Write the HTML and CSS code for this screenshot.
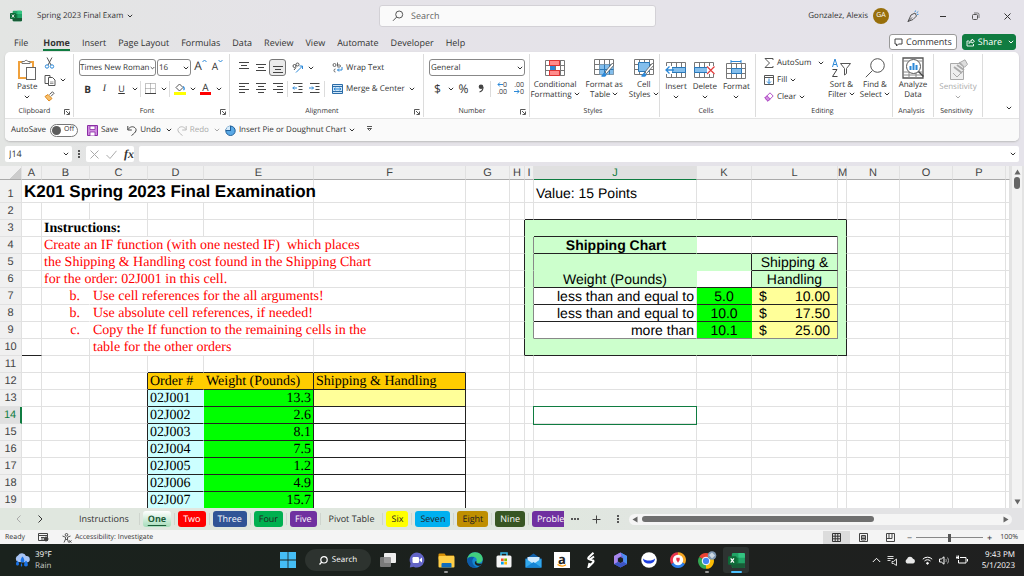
FILE: index.html
```html
<!DOCTYPE html>
<html lang="en">
<head>
  <meta charset="UTF-8" />
  <meta name="viewport" content="width=device-width, initial-scale=1.0"/>
  <title>Spring 2023 Final Exam</title>
  <link rel="stylesheet" href="styles.css">
</head>
<body>

  <svg class="defs" aria-hidden="true">
    <defs>
      <symbol id="chev" viewBox="0 0 6 4"><path d="M.8.8 3 3 5.2.8" fill="none" stroke="currentColor"/></symbol>
      <symbol id="launch" viewBox="0 0 6 6"><path d="M.5 5.5V.5h5M2 2l3 3M5.500 2.500v3h-3" fill="none" stroke="#444" stroke-width=".9"/></symbol>
      <symbol id="grid" viewBox="0 0 20 16"><path d="M.5.5h19v15H.5zM.5 5.500h19M.5 10.500h19M5.500.5v15M10.500.5v15M15.500.5v15" fill="#fff" stroke="#777"/></symbol>
      <symbol id="xl" viewBox="0 0 18 16">
        <rect x="4" width="14" height="16" rx="1.500" fill="#21a366"/>
        <path d="M11 0h5.500A1.500 1.500 0 0 1 18 1.500V5h-7z" fill="#33c481"/><path d="M4 5h7v6H4z" fill="#107c41"/><path d="M4 11h14v3.500a1.500 1.500 0 0 1-1.500 1.500H5.500A1.500 1.500 0 0 1 4 14.500z" fill="#185c37"/>
        <rect y="3.500" width="9" height="9" rx="1" fill="#0e6b38"/>
        <path d="M2.800 5.800l3.500 4.500M6.300 5.800l-3.500 4.500" stroke="#fff" stroke-width="1.300"/>
      </symbol>
    </defs>
  </svg>

  <div class="app">
    <header class="titlebar">
      <div class="doc">
        <svg class="logo"><use href="#xl"/></svg>
        <button class="doc-name">Spring 2023 Final Exam <svg class="chev"><use href="#chev"/></svg></button>
      </div>
      <label class="search">
        <svg width="12" height="12" viewBox="0 0 12 12"><circle cx="7.200" cy="4.500" r="3.500" fill="none" stroke="#555"/><path d="M4.700 7 1 10.800" stroke="#555"/></svg>
        <input type="text" placeholder="Search" aria-label="Search">
      </label>
      <div class="account">
        <span>Gonzalez, Alexis</span>
        <span class="avatar">GA</span>
        <button aria-label="Coming soon"><svg width="13" height="13" viewBox="0 0 13 13" fill="none" stroke="#444" stroke-width=".9"><path d="M2 11.500 5 5l4-2 1.500 3L7 9.500zM2 11.500l4-4"/><path d="M9 2l.6-1.500M10.500 3l1.800-1.500M11 4.500l1.500-.2" stroke="#2b88d8"/></svg></button>
        <button aria-label="Minimize"><svg width="9" height="9" viewBox="0 0 9 9"><path d="M1 4.500h6" stroke="#333"/></svg></button>
        <button aria-label="Restore"><svg width="9" height="9" viewBox="0 0 9 9" fill="none" stroke="#555"><rect x="1.500" y="2.500" width="5" height="5" rx="1"/><path d="M3 1h3.500a1.500 1.500 0 0 1 1.500 1.500V6" stroke-width=".8"/></svg></button>
        <button aria-label="Close"><svg width="9" height="9" viewBox="0 0 9 9"><path d="M1.500 1.500l6 6M7.500 1.500l-6 6" stroke="#333"/></svg></button>
      </div>
    </header>

    <nav class="menu">
      <button>File</button>
      <button class="active">Home</button>
      <button>Insert</button>
      <button>Page Layout</button>
      <button>Formulas</button>
      <button>Data</button>
      <button>Review</button>
      <button>View</button>
      <button>Automate</button>
      <button>Developer</button>
      <button>Help</button>
      <button class="comments"><svg width="9" height="9" viewBox="0 0 9 9"><path d="M1 1h7v5H4.500L2.500 8V6H1z" fill="none" stroke="#444"/></svg>Comments</button>
      <button class="share"><svg width="9" height="9" viewBox="0 0 9 9" fill="none" stroke="#fff" stroke-width=".9"><path d="M3 3H1v5h6.500V6M3 5.500C3 3.500 4.500 2.500 6 2.500V1l2.500 2.300L6 5.200V4C4.500 4 3.500 4.500 3 5.500z"/></svg>Share<svg class="chev"><use href="#chev"/></svg></button>
    </nav>

    <section class="ribbon">
      <div class="groups">
        <div class="group g-clip">
          <div class="body">
            <button class="big"><svg width="20" height="22" viewBox="0 0 20 22"><rect x="2" y="3" width="14" height="16" fill="#fff" stroke="#f0a13c" stroke-width="2"/><path d="M5 4.500V2.500h2.500a1.800 1.800 0 0 1 3.400 0H13v2z" fill="#fff" stroke="#777"/><rect x="9.500" y="8.500" width="9" height="12" fill="#fff" stroke="#666"/></svg>Paste<svg class="chev"><use href="#chev"/></svg></button>
            <div class="col3">
              <div class="row"><button class="ib" aria-label="Cut"><svg width="11" height="12" viewBox="0 0 11 12" fill="none"><path d="M3 .5l4 7.500M8 .5 4 8" stroke="#555"/><circle cx="3" cy="9.500" r="1.700" stroke="#2b88d8"/><circle cx="8" cy="9.500" r="1.700" stroke="#2b88d8"/></svg></button></div>
              <div class="row"><button class="ib" aria-label="Copy"><svg width="12" height="12" viewBox="0 0 12 12" fill="#fff" stroke="#555"><path d="M1 1.500h5v8H1z"/><path d="M4.500 3.500H8.500l2.500 2.500v5.500H4.500z"/><path d="M6 8h3.500M6 9.500h3.500" stroke-width=".6"/></svg></button><button class="cv" aria-label="Copy options"><svg class="chev"><use href="#chev"/></svg></button></div>
              <div class="row"><button class="ib" aria-label="Format Painter"><svg width="11" height="11" viewBox="0 0 11 11"><path d="M1 5.500 5 10l3-2.500-4-4z" fill="#f7c06c" stroke="#e08a1e"/><path d="M5.500 3.500 8.500.8l1.500 1.500-3 3" fill="#fff" stroke="#555"/></svg></button></div>
            </div>
          </div>
          <div class="foot"><span>Clipboard</span><svg class="launch"><use href="#launch"/></svg></div>
        </div>

        <div class="group g-font">
          <div class="body rows">
            <div class="row">
              <span class="drop name"><select aria-label="Font"><option>Times New Roman</option></select><svg class="chev"><use href="#chev"/></svg></span>
              <span class="drop size"><select aria-label="Font size"><option>16</option></select><svg class="chev"><use href="#chev"/></svg></span>
              <button class="ib grow" aria-label="Increase font size">A<svg width="5" height="4" viewBox="0 0 5 4"><path d="M.5 3l2-2 2 2" fill="none" stroke="#2b88d8"/></svg></button>
              <button class="ib shrink" aria-label="Decrease font size">A<svg width="5" height="4" viewBox="0 0 5 4"><path d="M.5 1l2 2 2-2" fill="none" stroke="#2b88d8"/></svg></button>
            </div>
            <div class="row">
              <button class="ib bold">B</button>
              <button class="ib ital">I</button>
              <button class="ib under">U</button>
              <button class="cv" aria-label="Underline options"><svg class="chev"><use href="#chev"/></svg></button>
              <i class="sep"></i>
              <button class="ib" aria-label="Borders"><svg width="11" height="11" viewBox="0 0 11 11"><path d="M.5.5h10v10H.5zM5.500.5v10M.5 5.500h10" fill="none" stroke="#888" stroke-dasharray="1 1"/><path d="M0 10.500h11" stroke="#444"/></svg></button>
              <button class="cv" aria-label="Border options"><svg class="chev"><use href="#chev"/></svg></button>
              <i class="sep"></i>
              <button class="ib" aria-label="Fill color"><svg width="12" height="13" viewBox="0 0 12 13"><path d="M2 5.500 5.500 2l3.500 3.500L5.500 9z" fill="#fff" stroke="#555"/><path d="M9 4.500c1.500 1 1.500 3 .5 3.500" fill="none" stroke="#2b88d8" stroke-width="1.300"/><path d="M0 10h12v3H0z" fill="#ff0"/></svg></button>
              <button class="cv" aria-label="Fill options"><svg class="chev"><use href="#chev"/></svg></button>
              <button class="ib fontcolor">A</button>
              <button class="cv" aria-label="Font color options"><svg class="chev"><use href="#chev"/></svg></button>
            </div>
          </div>
          <div class="foot"><span>Font</span><svg class="launch"><use href="#launch"/></svg></div>
        </div>

        <div class="group g-align">
          <div class="body rows">
            <div class="row">
              <button class="ib" aria-label="Top align"><svg width="10" height="11" viewBox="0 0 10 11" stroke="#444"><path d="M0 .5h10M2 3.500h6M0 6.500h10"/></svg></button>
              <button class="ib" aria-label="Middle align"><svg width="10" height="11" viewBox="0 0 10 11" stroke="#444"><path d="M0 2.500h10M2 5.500h6M0 8.500h10"/></svg></button>
              <button class="ib on" aria-label="Bottom align"><svg width="10" height="11" viewBox="0 0 10 11" stroke="#444"><path d="M0 4.500h10M2 7.500h6M0 10.500h10"/></svg></button>
              <i class="sep clear"></i>
              <button class="ib" aria-label="Orientation"><svg width="12" height="11" viewBox="0 0 12 11" fill="none"><circle cx="2.500" cy="4" r="1.500" stroke="#555"/><circle cx="5.500" cy="2.500" r="1.500" stroke="#555"/><path d="M4 5.500 2 8" stroke="#555"/><path d="M4 10.500 10.500 4M7.500 4h3v3" stroke="#2b88d8"/></svg></button>
              <button class="cv" aria-label="Orientation options"><svg class="chev"><use href="#chev"/></svg></button>
              <button class="txt wrap"><svg width="11" height="11" viewBox="0 0 11 11" fill="none"><circle cx="2.500" cy="3" r="1.500" stroke="#666"/><path d="M5.500.5v4M5.500 3h2a1 1 0 0 1 0 2H5.500M3.500 7a1.500 1.500 0 1 0 0 3" stroke="#666"/><path d="M10 5v3H5.500M7 6.500 5.500 8 7 9.500" stroke="#2b88d8"/></svg>Wrap Text</button>
            </div>
            <div class="row">
              <button class="ib" aria-label="Align left"><svg width="10" height="11" viewBox="0 0 10 11" stroke="#444"><path d="M0 .5h10M0 3.500h6M0 6.500h10M0 9.500h6"/></svg></button>
              <button class="ib" aria-label="Center"><svg width="10" height="11" viewBox="0 0 10 11" stroke="#444"><path d="M0 .5h10M2 3.500h6M0 6.500h10M2 9.500h6"/></svg></button>
              <button class="ib" aria-label="Align right"><svg width="10" height="11" viewBox="0 0 10 11" stroke="#444"><path d="M0 .5h10M4 3.500h6M0 6.500h10M4 9.500h6"/></svg></button>
              <i class="sep"></i>
              <button class="ib" aria-label="Decrease indent"><svg width="11" height="11" viewBox="0 0 11 11" fill="none" stroke="#444"><path d="M1 .5h9.500M6.500 3.500h4M6.500 6.500h4M1 9.500h9.500"/><path d="M5 5H.8M2.300 3.500.8 5l1.500 1.500" stroke="#2b88d8"/></svg></button>
              <button class="ib" aria-label="Increase indent"><svg width="11" height="11" viewBox="0 0 11 11" fill="none" stroke="#444"><path d="M1 .5h9.500M6.500 3.500h4M6.500 6.500h4M1 9.500h9.500"/><path d="M0 5h4.500M3 3.500 4.500 5 3 6.500" stroke="#2b88d8"/></svg></button>
              <i class="sep"></i>
              <button class="txt merge"><svg width="11" height="10" viewBox="0 0 11 10" fill="none"><path d="M.5.5h10v9H.5z" fill="#cfe6f8" stroke="#2b6ca8"/><path d="M.5 2.500h10M.5 7.500h10" stroke="#2b6ca8"/><path d="M2 5h7M3.500 3.800 2 5l1.500 1.200M7.500 3.800 9 5 7.500 6.200" stroke="#2b88d8"/></svg>Merge &amp; Center</button>
              <button class="cv" aria-label="Merge options"><svg class="chev"><use href="#chev"/></svg></button>
            </div>
          </div>
          <div class="foot"><span>Alignment</span><svg class="launch"><use href="#launch"/></svg></div>
        </div>

        <div class="group g-num">
          <div class="body rows">
            <div class="row"><span class="drop general"><select aria-label="Number format"><option>General</option></select><svg class="chev"><use href="#chev"/></svg></span></div>
            <div class="row">
              <button class="ib sym">$</button>
              <button class="cv" aria-label="Currency options"><svg class="chev"><use href="#chev"/></svg></button>
              <button class="ib sym">%</button>
              <button class="ib" aria-label="Comma style"><svg width="6" height="9" viewBox="0 0 6 9"><circle cx="3" cy="2.800" r="2.300" fill="#444"/><path d="M5 3c0 3-1.500 4.500-3.500 5" fill="none" stroke="#444" stroke-width="1.200"/></svg></button>
              <i class="sep"></i>
              <button class="ib dec"><svg width="6" height="5" viewBox="0 0 6 5"><path d="M6 2.500H1M2.800.5 1 2.500l1.800 2" fill="none" stroke="#2b88d8"/></svg>0<br>.00</button>
              <button class="ib dec">.00<br><svg width="6" height="5" viewBox="0 0 6 5"><path d="M0 2.500h5M3.200.5 5 2.500l-1.800 2" fill="none" stroke="#2b88d8"/></svg>0</button>
            </div>
          </div>
          <div class="foot"><span>Number</span><svg class="launch"><use href="#launch"/></svg></div>
        </div>

        <div class="group g-styles">
          <div class="body">
            <button class="big"><svg width="20" height="20" viewBox="0 0 20 20"><use href="#grid" y="2" width="20" height="16"/><path d="M4.500 2.500h10v5h-10zM4.500 12.500h10v5h-10z" fill="#ff8b8b" stroke="#d33"/><path d="M5 8h5v4H5z" fill="#2b88d8"/></svg>Conditional<br>Formatting <svg class="chev"><use href="#chev"/></svg></button>
            <button class="big"><svg width="20" height="20" viewBox="0 0 20 20"><use href="#grid" y="1" width="20" height="16"/><path d="M5.500 6.500h14v10h-14z" fill="#83beec"/><path d="M5.500 11.500h14M10.500 6.500v10M15.500 6.500v10" stroke="#2b78b8"/><path d="M18.500 5 11 14l1.500 1.500L20 7z" fill="#fff" stroke="#555" stroke-width=".8"/><path d="M10.500 14.500c-2 .5-1.500 3-4 3.500 3 1.500 6 1 6-1.500z" fill="#2b88d8"/></svg>Format as<br>Table <svg class="chev"><use href="#chev"/></svg></button>
            <button class="big"><svg width="20" height="20" viewBox="0 0 20 20"><use href="#grid" y="1" width="20" height="16"/><path d="M4.500 4.500h11v9h-11z" fill="#83beec" stroke="#2b78b8"/><path d="M18.500 5 11 14l1.500 1.500L20 7z" fill="#fff" stroke="#555" stroke-width=".8"/><path d="M10.500 14.500c-2 .5-1.500 3-4 3.500 3 1.500 6 1 6-1.500z" fill="#2b88d8"/></svg>Cell<br>Styles <svg class="chev"><use href="#chev"/></svg></button>
          </div>
          <div class="foot"><span>Styles</span></div>
        </div>

        <div class="group g-cells">
          <div class="body">
            <button class="big"><svg width="21" height="20" viewBox="0 0 21 20"><use href="#grid" x="1" y="2" width="20" height="16"/><path d="M7 7.500h13.500v5H7z" fill="#83beec" stroke="#2b78b8"/><path d="M0 6h7v8H0z" fill="#fff"/><path d="M9 10H1M4.500 6.500 1 10l3.500 3.500" fill="none" stroke="#2b88d8" stroke-width="1.300"/></svg>Insert<svg class="chev"><use href="#chev"/></svg></button>
            <button class="big"><svg width="21" height="20" viewBox="0 0 21 20"><use href="#grid" y="2" width="20" height="16"/><path d="M.5 7.500h13v5H.5z" fill="#83beec" stroke="#2b78b8"/><path d="M13 6h8v8h-8z" fill="#fff"/><path d="M13 6.500l7.500 7.500M20.500 6.500 13 14" stroke="#e23c3c" stroke-width="1.200"/></svg>Delete<svg class="chev"><use href="#chev"/></svg></button>
            <button class="big"><svg width="20" height="20" viewBox="0 0 20 20"><path d="M5 1.500h10M5 0v3M15 0v3" stroke="#2b88d8"/><use href="#grid" y="3" width="20" height="16"/><path d="M5.500 8.500h10v5h-10z" fill="#83beec" stroke="#2b78b8"/></svg>Format<svg class="chev"><use href="#chev"/></svg></button>
          </div>
          <div class="foot"><span>Cells</span></div>
        </div>

        <div class="group g-edit">
          <div class="body">
            <div class="col3 edits">
              <button class="txt"><svg width="10" height="10" viewBox="0 0 10 10"><path d="M9 2V.5H1L5.500 5 1 9.500h8V8" fill="none" stroke="#555"/></svg><span class="wide">AutoSum</span><svg class="chev"><use href="#chev"/></svg></button>
              <button class="txt"><svg width="10" height="10" viewBox="0 0 10 10" fill="none"><path d="M.5.5h9v9h-9zM.5 2.500h9" stroke="#555"/><path d="M5 3.500v5M3 6.500l2 2 2-2" stroke="#2b88d8"/></svg>Fill<svg class="chev"><use href="#chev"/></svg></button>
              <button class="txt"><svg width="10" height="10" viewBox="0 0 10 10"><path d="M.8 6 6 .8 9.200 4 4 9.200z" fill="#fff" stroke="#b14fc5"/><path d="M.8 6 3 3.800 6.200 7 4 9.200z" fill="#d08be0" stroke="#b14fc5"/></svg>Clear<svg class="chev"><use href="#chev"/></svg></button>
            </div>
            <button class="big"><svg width="20" height="20" viewBox="0 0 20 20" fill="none"><path d="M1.500 9 4 1l2.500 8M2.300 6.500h3.400" stroke="#2b88d8"/><path d="M1.500 11.500H6L1.500 18.500H6.500" stroke="#444"/><path d="M9.500 5.500h10l-4 5v5l-2 1.500v-6.500z" stroke="#555"/></svg>Sort &amp;<br>Filter <svg class="chev"><use href="#chev"/></svg></button>
            <button class="big"><svg width="20" height="20" viewBox="0 0 20 20" fill="none" stroke="#555"><circle cx="12.500" cy="7.500" r="6.800"/><path d="M7.500 12.500.8 19.200"/></svg>Find &amp;<br>Select <svg class="chev"><use href="#chev"/></svg></button>
          </div>
          <div class="foot"><span>Editing</span></div>
        </div>

        <div class="group g-analysis">
          <div class="body">
            <button class="big"><svg width="22" height="22" viewBox="0 0 22 22" fill="none"><path d="M1 1h20v20H1z" stroke="#555" stroke-width="1.300"/><path d="M1 4h20M1 15h20M1 18h20M7 15v6M14 15v6" stroke="#888"/><circle cx="11.500" cy="9.500" r="7" fill="#fff" stroke="#555"/><path d="M8.500 9v4M11.500 6v7M14.500 8v5" stroke="#2b88d8" stroke-width="2"/><path d="M16.500 14.500l5 5" stroke="#444" stroke-width="1.400"/></svg>Analyze<br>Data</button>
          </div>
          <div class="foot"><span>Analysis</span></div>
        </div>

        <div class="group g-sens">
          <div class="body">
            <button class="big" disabled><svg width="20" height="22" viewBox="0 0 20 22" fill="none" stroke="#aaa"><path d="M2.500 4.500h13v16h-13z" fill="#eee"/><path d="M5 14l4 4 6-6"/><path d="M6 8l8 6M9 6l7 5M11 3.500l5 4" stroke-width="2"/><path d="M12 3.500 17 .8l2.500 4.500-3 3z" fill="#ddd"/></svg>Sensitivity<svg class="chev"><use href="#chev"/></svg></button>
          </div>
          <div class="foot"><span>Sensitivity</span></div>
        </div>
        <button class="collapse" aria-label="Collapse ribbon"><svg class="chev"><use href="#chev"/></svg></button>
      </div>

      <div class="quick">
        <label class="autosave">AutoSave <input type="checkbox"><span class="toggle">Off</span></label>
        <button class="txt save"><svg width="11" height="11" viewBox="0 0 11 11"><path d="M.5.5h10v10H.5z" fill="#d08be0" stroke="#8a2da5"/><path d="M3 1h5v3.500H3zM3 7h5v4H3z" fill="#fff" stroke="#8a2da5" stroke-width=".8"/></svg>Save</button>
        <button class="txt undo"><svg width="10" height="11" viewBox="0 0 10 11"><path d="M.8 1v4h4M1 4.500C3 1.500 6 1 8 2.800s1.500 4.200-3.500 7.700" fill="none" stroke="#444"/></svg>Undo</button>
        <svg class="chev"><use href="#chev"/></svg>
        <button class="txt redo" disabled><svg width="10" height="11" viewBox="0 0 10 11"><path d="M9.200 1v4h-4M9 4.500C7 1.500 4 1 2 2.800S.5 7 5.500 10.500" fill="none" stroke="#bbb"/></svg>Redo</button>
        <svg class="chev dim"><use href="#chev"/></svg>
        <button class="txt"><svg width="11" height="11" viewBox="0 0 11 11"><circle cx="5.500" cy="5.800" r="4.700" fill="#5aa9e6" stroke="#1f5f99"/><path d="M1 5.500A4.500 4.500 0 0 1 5.500 1v4.500z" fill="#d6ebfa"/><path d="M5.500 6V.8M5.500 5.500H.8" stroke="#1f5f99"/></svg>Insert Pie or Doughnut Chart<svg class="chev"><use href="#chev"/></svg></button>
        <button class="custom" aria-label="Customize toolbar"><svg width="5" height="6" viewBox="0 0 5 6"><path d="M0 .5h5M.5 2.500l2 2 2-2z" fill="none" stroke="#444" stroke-width=".9"/></svg></button>
      </div>
    </section>

    <div class="formula">
      <div class="namebox"><input type="text" value="J14" aria-label="Name box"><svg class="chev"><use href="#chev"/></svg></div>
      <svg class="dots" viewBox="0 0 2 8"><path d="M0 0h2v2H0zM0 3h2v2H0zM0 6h2v2H0z" fill="#555"/></svg>
      <div class="fx">
        <svg width="9" height="9" viewBox="0 0 9 9"><path d="M.5.5l8 8M8.500.5l-8 8" stroke="#aaa"/></svg>
        <svg width="11" height="9" viewBox="0 0 11 9"><path d="M.5 5 4 8.500 10.500.8" fill="none" stroke="#aaa"/></svg>
        <button>fx</button>
      </div>
      <div class="entry"><input type="text" aria-label="Formula bar"><svg class="chev"><use href="#chev"/></svg></div>
    </div>

    <main class="sheet">
      <div class="cells">
        <table>
          <colgroup>
            <col class="c-num"><col class="c-a"><col class="c-b"><col class="c-c"><col class="c-d"><col class="c-e"><col class="c-f"><col class="c-g"><col class="c-h"><col class="c-i"><col class="c-j"><col class="c-k"><col class="c-l"><col class="c-m"><col class="c-n"><col class="c-n"><col class="c-n"><col>
          </colgroup>
          <thead>
            <tr><th class="corner"></th><th>A</th><th>B</th><th>C</th><th>D</th><th>E</th><th>F</th><th>G</th><th>H</th><th>I</th><th class="cur">J</th><th>K</th><th>L</th><th>M</th><th>N</th><th>O</th><th>P</th><th></th></tr>
          </thead>
          <tbody>
            <tr class="first"><th>1</th><td colspan="5" class="title">K201 Spring 2023 Final Examination</td><td></td><td></td><td></td><td></td><td class="value">Value: 15 Points</td><td></td><td></td><td></td><td></td><td></td><td></td><td></td></tr>
            <tr><th>2</th><td></td><td></td><td></td><td></td><td></td><td></td><td></td><td></td><td class="bb"></td><td class="bb"></td><td class="bb"></td><td class="bb"></td><td class="bb"></td><td></td><td></td><td></td><td></td></tr>
            <tr><th>3</th><td></td><td colspan="2" class="strong">Instructions:</td><td></td><td></td><td></td><td></td><td class="br"></td><td class="g"></td><td class="g bb"></td><td class="g bb"></td><td class="g bb"></td><td class="g br"></td><td></td><td></td><td></td><td></td></tr>
            <tr><th>4</th><td></td><td colspan="5" class="red">Create an IF function (with one nested IF)  which places</td><td></td><td class="br"></td><td class="g bg"></td><td class="g bb chart">Shipping Chart</td><td class="bb"></td><td class="bb bg"></td><td class="g br"></td><td></td><td></td><td></td><td></td></tr>
            <tr><th>5</th><td></td><td colspan="5" class="red">the Shipping &amp; Handling cost found in the Shipping Chart</td><td></td><td class="br"></td><td class="g bg"></td><td class="g"></td><td class="g br"></td><td class="g mid bb bg">Shipping &amp;</td><td class="g br"></td><td></td><td></td><td></td><td></td></tr>
            <tr><th>6</th><td></td><td colspan="4" class="red">for the order: 02J001 in this cell.</td><td></td><td></td><td class="br"></td><td class="g bg"></td><td class="g mid bb">Weight (Pounds)</td><td class="bb br"></td><td class="g mid bb bg">Handling</td><td class="g br"></td><td></td><td></td><td></td><td></td></tr>
            <tr><th>7</th><td></td><td class="red item">b.</td><td colspan="4" class="red step">Use cell references for the all arguments!</td><td></td><td class="br"></td><td class="g bg"></td><td class="num arial bb">less than and equal to</td><td class="lime mid bb">5.0</td><td class="yellow bb bg"><div class="money"><span>$</span><span>10.00</span></div></td><td class="g br"></td><td></td><td></td><td></td><td></td></tr>
            <tr><th>8</th><td></td><td class="red item">b.</td><td colspan="4" class="red step">Use absolute cell references, if needed!</td><td></td><td class="br"></td><td class="g bg"></td><td class="num arial bb">less than and equal to</td><td class="lime mid bb">10.0</td><td class="yellow bb bg"><div class="money"><span>$</span><span>17.50</span></div></td><td class="g br"></td><td></td><td></td><td></td><td></td></tr>
            <tr><th>9</th><td></td><td class="red item">c.</td><td colspan="4" class="red step">Copy the If function to the remaining cells in the</td><td></td><td class="br"></td><td class="g bg"></td><td class="num arial bbg">more than</td><td class="lime mid bbg">10.1</td><td class="yellow bbg bg"><div class="money"><span>$</span><span>25.00</span></div></td><td class="g br"></td><td></td><td></td><td></td><td></td></tr>
            <tr><th>10</th><td class="bb"></td><td></td><td colspan="3" class="red step">table for the other orders</td><td></td><td></td><td class="br"></td><td class="g bb"></td><td class="g bb"></td><td class="g bb"></td><td class="g bb"></td><td class="g bb br"></td><td></td><td></td><td></td><td></td></tr>
            <tr><th>11</th><td></td><td></td><td></td><td class="bb"></td><td class="bb"></td><td class="bb"></td><td></td><td></td><td></td><td></td><td></td><td></td><td></td><td></td><td></td><td></td><td></td></tr>
            <tr><th>12</th><td></td><td></td><td class="br"></td><td class="gold bb">Order #</td><td class="gold bb br">Weight (Pounds)</td><td class="gold bb br">Shipping &amp; Handling</td><td></td><td></td><td></td><td></td><td></td><td></td><td></td><td></td><td></td><td></td><td></td></tr>
            <tr><th>13</th><td></td><td></td><td class="br"></td><td class="aqua bb">02J001</td><td class="lime num bb br">13.3</td><td class="yellow bb br"></td><td></td><td></td><td></td><td></td><td></td><td></td><td></td><td></td><td></td><td></td><td></td></tr>
            <tr><th class="cur">14</th><td></td><td></td><td class="br"></td><td class="aqua bb">02J002</td><td class="lime num bb br">2.6</td><td class="bb br"></td><td></td><td></td><td></td><td class="selected"></td><td></td><td></td><td></td><td></td><td></td><td></td><td></td></tr>
            <tr><th>15</th><td></td><td></td><td class="br"></td><td class="aqua bb">02J003</td><td class="lime num bb br">8.1</td><td class="bb br"></td><td></td><td></td><td></td><td></td><td></td><td></td><td></td><td></td><td></td><td></td><td></td></tr>
            <tr><th>16</th><td></td><td></td><td class="br"></td><td class="aqua bb">02J004</td><td class="lime num bb br">7.5</td><td class="bb br"></td><td></td><td></td><td></td><td></td><td></td><td></td><td></td><td></td><td></td><td></td><td></td></tr>
            <tr><th>17</th><td></td><td></td><td class="br"></td><td class="aqua bb">02J005</td><td class="lime num bb br">1.2</td><td class="bb br"></td><td></td><td></td><td></td><td></td><td></td><td></td><td></td><td></td><td></td><td></td><td></td></tr>
            <tr><th>18</th><td></td><td></td><td class="br"></td><td class="aqua bb">02J006</td><td class="lime num bb br">4.9</td><td class="bb br"></td><td></td><td></td><td></td><td></td><td></td><td></td><td></td><td></td><td></td><td></td><td></td></tr>
            <tr><th>19</th><td></td><td></td><td class="br"></td><td class="aqua">02J007</td><td class="lime num br">15.7</td><td class="br"></td><td></td><td></td><td></td><td></td><td></td><td></td><td></td><td></td><td></td><td></td><td></td></tr>
          </tbody>
        </table>
      </div>
      <div class="vscroll">
        <svg width="7" height="6" viewBox="0 0 7 6"><path d="M3.500.5l3 5h-6z" fill="#666"/></svg>
        <div class="thumb"></div>
        <svg width="7" height="6" viewBox="0 0 7 6"><path d="M3.500 5.500l3-5h-6z" fill="#666"/></svg>
      </div>
    </main>

    <div class="tabs">
      <button class="arrow dim" aria-label="Previous sheet"><svg width="5" height="8" viewBox="0 0 5 8"><path d="M4.500.5 1 4l3.500 3.500" fill="none" stroke="currentColor"/></svg></button>
      <button class="arrow" aria-label="Next sheet"><svg width="5" height="8" viewBox="0 0 5 8"><path d="M.5.5 4 4 .5 7.500" fill="none" stroke="currentColor"/></svg></button>
      <button class="tab plain lead">Instructions</button>
      <button class="tab one">One</button>
      <button class="tab two">Two</button>
      <button class="tab three">Three</button>
      <button class="tab four">Four</button>
      <button class="tab five">Five</button>
      <button class="tab plain">Pivot Table</button>
      <button class="tab six">Six</button>
      <button class="tab seven">Seven</button>
      <button class="tab eight">Eight</button>
      <button class="tab nine">Nine</button>
      <button class="tab prob">Proble</button>
      <button class="more" aria-label="More sheets"><svg width="8" height="2" viewBox="0 0 8 2"><path d="M0 0h2v2H0zM3 0h2v2H3zM6 0h2v2H6z" fill="#555"/></svg></button>
      <button class="more" aria-label="New sheet"><svg width="9" height="9" viewBox="0 0 9 9"><path d="M4.500.5v8M.5 4.500h8" stroke="#444"/></svg></button>
      <svg class="dots" viewBox="0 0 2 8"><path d="M0 0h2v2H0zM0 3h2v2H0zM0 6h2v2H0z" fill="#555"/></svg>
      <div class="hscroll">
        <svg width="6" height="7" viewBox="0 0 6 7"><path d="M.5 3.500l5-3v6z" fill="#666"/></svg>
        <div class="track"><div class="thumb"></div></div>
        <svg width="6" height="7" viewBox="0 0 6 7"><path d="M5.500 3.500l-5-3v6z" fill="#666"/></svg>
      </div>
    </div>

    <footer class="status">
      <span>Ready</span>
      <svg width="11" height="9" viewBox="0 0 11 9" fill="none" stroke="#444"><path d="M.5.5h9v7h-9zM.5 2.500h9M3 4.500h3M3 6h2"/><circle cx="8" cy="6" r="2" fill="#444"/></svg>
      <button class="txt"><svg width="10" height="10" viewBox="0 0 10 10" fill="none" stroke="#444" stroke-width=".9"><circle cx="4.500" cy="1.800" r="1.300"/><path d="M.5 3l3 1.200v2L2 9.500M8.500 3l-3 1.200v2l1 3.300M3.500 6.500h2M7 7.500l2.500 2M9.500 7.500 7 9.500"/></svg>Accessibility: Investigate</button>
      <div class="views">
        <button class="on" aria-label="Normal"><svg width="9" height="9" viewBox="0 0 9 9" fill="none" stroke="#333"><path d="M.5.5h8v8h-8zM.5 3.200h8M.5 5.800h8M3.200.5v8M5.800.5v8"/></svg></button>
        <button aria-label="Page layout"><svg width="9" height="9" viewBox="0 0 9 9" fill="none" stroke="#444"><path d="M.5.5h8v8h-8zM2.500 2.500h4v4.500h-4zM3 4h3M3 5.500h3"/></svg></button>
        <button aria-label="Page break"><svg width="9" height="9" viewBox="0 0 9 9" fill="none" stroke="#444"><path d="M.5.5h8v8h-8zM3 .5v5h3v-5M.5 5.500h3"/></svg></button>
      </div>
      <div class="zoom">
        <button aria-label="Zoom out">−</button>
        <input type="range" min="0" max="100" value="50" aria-label="Zoom">
        <button aria-label="Zoom in">+</button>
        <span class="pct">100%</span>
      </div>
    </footer>
  </div>

  <div class="taskbar">
    <div class="weather">
      <svg width="17" height="16" viewBox="0 0 17 16"><path d="M4 10a3.500 3.500 0 0 1 0-6.500A4.500 4.500 0 0 1 12 4a3 3 0 0 1 1 6.500z" fill="#a8c4f5"/><path d="M3.500 8.500c-2 2.500-2 5 0 5s2-2.500 0-5zM8.500 4.500c-2.500 3-2.500 6 0 6s2.500-3 0-6zM12 8.500c-2.500 3-2.500 6 0 6s2.500-3 0-6zM7.500 11c-1 1.500-1 3.500 0 3.500s1-2 0-3.500z" fill="#1a73e8"/></svg>
      <div>39°F<br><span>Rain</span></div>
    </div>
    <div class="apps">
      <button aria-label="Start"><svg width="16" height="16" viewBox="0 0 16 16"><path d="M0 0h7.600v7.600H0zM8.400 0H16v7.600H8.400zM0 8.400h7.600V16H0zM8.400 8.400H16V16H8.400z" fill="#45bdf5"/></svg></button>
      <button class="pill"><svg width="9" height="9" viewBox="0 0 9 9" fill="none" stroke="#fff" stroke-width="1.200"><circle cx="5" cy="3.800" r="3.200"/><path d="M2.800 6 .5 8.500"/></svg>Search</button>
      <button aria-label="Task view"><svg width="18" height="16" viewBox="0 0 18 16"><rect x="5" y="1" width="12" height="10" rx="1" fill="#eee"/><rect x="1" y="5" width="11" height="10" rx="1" fill="#8a8a8a" opacity=".85"/></svg></button>
      <button aria-label="Chat"><svg width="16" height="16" viewBox="0 0 16 16"><path d="M8 .5a7.500 7.500 0 1 1-3.500 14.200L.8 15.500l.7-4A7.500 7.500 0 0 1 8 .5z" fill="#6264c7"/><rect x="3.500" y="5" width="6.500" height="6" rx="1.200" fill="#fff"/><path d="M10.500 7.500l2.500-2v5l-2.500-2z" fill="#fff"/></svg></button>
      <button class="open" aria-label="File Explorer"><svg width="17" height="15" viewBox="0 0 17 15"><path d="M.5 1.500A1 1 0 0 1 1.500.5h5l1.500 2h8v4H.5z" fill="#d99208"/><rect x=".5" y="3" width="16" height="11.500" rx="1" fill="#ffcf48"/><path d="M3.500 14.500V11a1 1 0 0 1 1-1h8a1 1 0 0 1 1 1v3.500z" fill="#0f6cbd"/></svg></button>
      <button aria-label="Edge"><svg width="16" height="16" viewBox="0 0 16 16"><circle cx="8" cy="8" r="7.800" fill="#1687d0"/><path d="M.3 7C1 3 4 .2 8 .2c5 0 8 3.500 7.700 7C15.500 9.500 13.500 11 11 11c-1.500 0-2-1-1.500-2 1-2-1-4.500-4-4.300C3 5 1.300 6 .3 7z" fill="#42cf7e"/><path d="M.3 7C1.500 4.500 5 4 7.500 5.500 5.500 6.500 4.500 9 6 12c1 2 3 3 5 3.200C5 17.500-.5 13 .3 7z" fill="#0d5aa8"/><path d="M9.500 9c-1 2 1 3.500 5.500 2.500-1 2-3 2.800-5 2C7 12 7.500 9 9.500 9z" fill="#1b211d"/></svg></button>
      <button aria-label="Store"><svg width="16" height="16" viewBox="0 0 16 16"><path d="M5 4V1h6v3" fill="none" stroke="#37b6e8" stroke-width="1.500"/><rect x=".5" y="3.500" width="15" height="12" rx="1.500" fill="#f5f5f5"/><path d="M5 6.500h2.700v2.700H5z" fill="#f25022"/><path d="M8.300 6.500H11v2.700H8.300z" fill="#7fba00"/><path d="M5 9.800h2.700v2.700H5z" fill="#00a4ef"/><path d="M8.300 9.800H11v2.700H8.300z" fill="#ffb900"/></svg></button>
      <button aria-label="Mail"><svg width="17" height="15" viewBox="0 0 17 15"><path d="M.5 6 8.500.5l8 5.500v8.500H.5z" fill="#0f5ea8"/><path d="M2.500 4h12v6h-12z" fill="#cfeaff"/><path d="M.5 5.500l8 5.500 8-5.500v9H.5z" fill="#32a8ec"/><path d="M.5 14.500l8-5.500 8 5.500z" fill="#1684d4"/></svg></button>
      <button class="amazon" aria-label="Amazon"><b>a</b><svg width="10" height="3" viewBox="0 0 10 3"><path d="M.5.5c3 2 6 2 8.500.3" fill="none" stroke="#f90" stroke-width="1.200"/></svg></button>
      <button aria-label="App"><svg width="10" height="16" viewBox="0 0 10 16"><path d="M7.500.8 2.500 5.500c-.8 1 .2 1.600 1.500 2l3 1c1 .5.500 1.500-.5 2.500L2.500 15l1-4M8 4.500 4.500 7" fill="none" stroke="#fff" stroke-width="2"/></svg></button>
      <button aria-label="Microsoft 365"><svg width="15" height="16" viewBox="0 0 15 16"><path d="M7.500.5 14 4v8l-6.500 3.500L1 12V4z" fill="#6a63d8"/><path d="M7.500.5 14 4v8l-3.500-2V6z" fill="#4b8eef"/><path d="M1 12l6.500 3.500L14 12l-3.500-2-3 1.500L4.500 10z" fill="#3a55c4"/><path d="M7.500.5 1 4v8l3.500-2V6l4-2z" fill="#a987ea"/><path d="M7.500 5 10 6.500v3L7.500 11 5 9.500v-3z" fill="#1b211d"/></svg></button>
      <button aria-label="App"><svg width="16" height="16" viewBox="0 0 16 16"><circle cx="8" cy="8" r="7.800" fill="#fff"/><path d="M2 6.500c1.500 1.500 3.500 2 6 2s4.500-.5 6-2c0 3-2.500 5-6 5s-6-2-6-5z" fill="#1d3fe0"/></svg></button>
      <button aria-label="Browser"><svg width="16" height="16" viewBox="0 0 16 16"><path d="M8 8V.2A7.800 7.800 0 0 1 14.800 12z" fill="#f5a623"/><path d="M8 8l6.800 4A7.800 7.800 0 0 1 1.200 12z" fill="#2f80ed"/><path d="M8 8 1.200 12A7.800 7.800 0 0 1 8 .2z" fill="#e5354b"/><circle cx="8" cy="8" r="5.200" fill="#fff"/><path d="M6.300 5.800h3.400v2.200L8 10.800 6.300 8z" fill="#e5354b"/></svg></button>
      <button class="open" aria-label="Chrome"><svg width="19" height="18" viewBox="0 0 19 18"><path d="M8 10 1.200 6A7.800 7.800 0 0 1 14.800 6H8z" fill="#ea4335"/><path d="M8 10l6.800-4A7.800 7.800 0 0 1 8 17.800z" fill="#fbbc05"/><path d="M8 10v7.800A7.800 7.800 0 0 1 1.200 6z" fill="#34a853"/><circle cx="8" cy="10" r="3.800" fill="#4285f4" stroke="#fff"/><circle cx="14" cy="4.500" r="4.300" fill="#7f98b3"/><path d="M11 4l3-2.500 3 3-3 3z" fill="#ccd8e2"/></svg></button>
      <button class="open active" aria-label="Excel"><svg width="17" height="15"><use href="#xl"/></svg></button>
    </div>
    <div class="tray">
      <svg width="9" height="6" viewBox="0 0 9 6"><path d="M.8 5 4.500 1.300 8.200 5" fill="none" stroke="#fff"/></svg>
      <svg width="11" height="11" viewBox="0 0 11 11" fill="none" stroke="#ddd"><path d="M.5 1.500h6M.5 3.500h6M.5 5.500h3M5 6.500h1.500L9.500 4v6.500L6.500 8.500H5z"/></svg>
      <svg width="12" height="8" viewBox="0 0 12 8"><path d="M3 7.500a2.500 2.500 0 0 1 0-4.500 3.200 3.200 0 0 1 6-.3 2.500 2.500 0 0 1 .3 4.800z" fill="#e8e8e8"/></svg>
      <svg width="11" height="9" viewBox="0 0 11 9" fill="none" stroke="#fff"><path d="M.8 3.200a6.500 6.500 0 0 1 9.400 0M2.500 5a4.200 4.200 0 0 1 6 0"/><circle cx="5.500" cy="7.300" r=".9" fill="#fff"/></svg>
      <svg width="11" height="9" viewBox="0 0 11 9" fill="none" stroke="#fff"><path d="M.5 3h1.800L5 .8v7.400L2.300 6H.5z"/><path d="M6.800 3c.6 1 .6 2 0 3M8.500 1.500c1.300 2 1.300 4 0 6" stroke="#aaa"/></svg>
      <svg width="12" height="10" viewBox="0 0 12 10" fill="none" stroke="#fff"><path d="M4 2.500h6v5.500H2.500V5M11.500 4v2.500"/><path d="M0 2.500h3M1 .5v3.500M2.500.5v3.500"/></svg>
      <div class="clock">9:43 PM<br>5/1/2023</div>
    </div>
  </div>

</body>
</html>
```

FILE: styles.css
```css
* {
  box-sizing: border-box;
}

body {
  margin: 0;
  height: 100vh;
  display: flex;
  flex-direction: column;
  font: 8px/10px "Open Sans", "Noto Sans", sans-serif;
  text-rendering: geometricPrecision;
  color: #333;
  overflow: hidden;
}

button {
  border: 0;
  padding: 0;
  background: none;
  font: inherit;
  color: inherit;
  text-rendering: inherit;
  white-space: nowrap;
}

input, select {
  font: inherit;
  color: inherit;
  text-rendering: inherit;
  border: 0;
  padding: 0;
  margin: 0;
  background: none;
  min-width: 0;
  outline: none;
}

svg {
  display: inline-block;
  flex: none;
}

.defs {
  position: absolute;
  width: 0;
  height: 0;
}

.chev {
  width: 6px;
  height: 4px;
}

.app {
  flex: 1;
  min-height: 0;
  display: flex;
  flex-direction: column;
  background: linear-gradient(90deg, #e3e5e3, #e5e3e8 30%, #e5e3ea);
}

/* title bar */
.titlebar {
  height: 32px;
  flex: none;
  display: grid;
  grid-template-columns: 379fr 277fr 368fr;
  align-items: center;
}

.doc {
  display: flex;
  align-items: center;
  gap: 15px;
  padding-left: 10px;
}

.logo {
  width: 12px;
  height: 12px;
}

.doc-name .chev {
  margin-left: 2px;
}

.search {
  height: 22px;
  display: flex;
  align-items: center;
  gap: 7px;
  padding-left: 12px;
  background: #fafafa;
  border: 1px solid #d3d1d6;
  border-radius: 3px;
  font-size: 9px;
}

.search input {
  flex: 1;
}

.search input::placeholder {
  color: #666;
  opacity: 1;
}

.account {
  display: flex;
  align-items: center;
  justify-content: flex-end;
  padding-right: 12px;
}

.avatar {
  width: 16px;
  height: 16px;
  margin: 0 17px 0 5px;
  border-radius: 50%;
  background: #986f0b;
  color: #fff;
  font-size: 7px;
  line-height: 16px;
  text-align: center;
}

.account button {
  display: flex;
}

.account button + button {
  margin-left: 23px;
}

.account button:nth-of-type(2) {
  margin-left: 20px;
}

/* ribbon tabs */
.menu {
  height: 20px;
  flex: none;
  display: flex;
  align-items: center;
  gap: 12px;
  padding: 0 8px 0 14px;
  font-size: 9px;
}

.menu button {
  height: 18px;
  padding-top: 3px;
  border-bottom: 2px solid transparent;
}

.menu .active {
  font-weight: bold;
  margin-left: 3px;
  border-color: #107c41;
}

.menu .comments,
.menu .share {
  display: flex;
  align-items: center;
  gap: 3px;
  height: 16px;
  border: 1px solid #999;
  border-radius: 3px;
  padding: 0 4px;
  background: #fff;
}

.menu .comments {
  margin-left: auto;
}

.menu .share {
  background: #107c41;
  border-color: #107c41;
  color: #fff;
  margin-left: -7px;
  padding: 0 1px 0 3px;
}

.share .chev {
  margin-left: 3px;
}

/* ribbon */
.ribbon {
  flex: none;
  margin: 0 5px;
  background: #fff;
  border-radius: 5px;
  box-shadow: 0 1px 2px #bbb;
}

.groups {
  height: 66px;
  display: flex;
  padding-top: 2px;
}

.group {
  flex: none;
  height: 63px;
  display: flex;
  flex-direction: column;
  border-right: 1px solid #dcdcdc;
}

.body {
  flex: 1;
  display: flex;
  justify-content: center;
  gap: 6px;
}

.rows {
  flex-direction: column;
  justify-content: flex-start;
  gap: 4px;
  padding: 5px 0 0 5px;
}

.row {
  display: flex;
  align-items: center;
}

.foot {
  height: 10px;
  display: flex;
  align-items: center;
  font-size: 7px;
  padding-right: 3px;
}

.foot span {
  flex: 1;
  text-align: center;
}

.launch {
  width: 6px;
  height: 6px;
}

.g-clip { width: 69px; }
.g-font { width: 156px; }
.g-align { width: 194px; }
.g-num { width: 106px; }
.g-styles { width: 130px; }
.g-cells { width: 96px; }
.g-edit { width: 137px; }
.g-analysis { width: 41px; }
.g-sens { width: 49px; }

.big {
  display: block;
  height: 46px;
  text-align: center;
}

.big > svg:first-child {
  display: block;
  height: 22px;
  margin: 3px auto 1px;
}

.big > .chev {
  margin-bottom: 1px;
}

.big > .chev:last-child:nth-child(2) {
  display: block;
  margin: 3px auto 0;
}

.big:disabled {
  color: #aaa;
}

.col3 {
  display: flex;
  flex-direction: column;
}

.g-clip .body {
  gap: 4px;
  justify-content: flex-start;
  padding-left: 12px;
}

.g-edit .body {
  gap: 5px;
  justify-content: flex-start;
  padding-left: 8px;
}

.edits {
  width: 59px;
}

.edits .wide {
  margin-right: 4px;
}

.ib {
  width: 17px;
  height: 17px;
  display: flex;
  align-items: center;
  justify-content: center;
}

.cv {
  width: 9px;
  height: 17px;
  display: flex;
  align-items: center;
  justify-content: center;
}

.sep {
  width: 1px;
  height: 16px;
  margin: 0 1px;
  background: #dcdcdc;
}

.sep.clear {
  background: none;
}

.on {
  background: #ebebeb;
}

.ib.on {
  border: 1px solid #777;
  border-radius: 3px;
}

.txt {
  display: flex;
  align-items: center;
  gap: 3px;
  height: 17px;
}

.wrap {
  margin-left: 17px;
}

.merge {
  margin: 0 3px 0 6px;
}

.drop {
  position: relative;
  display: flex;
  height: 17px;
  border: 1px solid #888;
  border-radius: 3px;
}

.drop select {
  flex: 1;
  appearance: none;
  padding-left: 1px;
}

.drop .chev {
  position: absolute;
  right: 1px;
  top: 6px;
}

.drop.name { width: 77px; }
.drop.size { width: 34px; margin: 0 1px; }
.drop.general { width: 96px; }

.drop.name select { padding-left: 0; }
.drop.name .chev { right: 0; width: 5px; }

.grow { font-size: 12px; align-items: flex-start; line-height: 14px; }
.shrink { font-size: 10px; align-items: flex-start; line-height: 15px; }
.bold { font-weight: bold; font-size: 10px; }
.ital { font: italic 10px "Liberation Serif", serif; }
.under { text-decoration: underline; font-size: 9px; }

.fontcolor {
  font-size: 10px;
  height: 13px;
  border-bottom: 3px solid #f00;
  width: 11px;
  margin: 0 3px;
}

.sym {
  font-size: 12px;
}

.dec {
  display: block;
  font-size: 7px;
  line-height: 7px;
  text-align: right;
  padding-right: 2px;
}

.collapse {
  margin: auto 7px 5px auto;
}

/* quick access bar */
.quick {
  height: 23px;
  display: flex;
  align-items: center;
  gap: 5px;
  padding-left: 6px;
  background: #fafafa;
  border-top: 1px solid #e3e3e3;
  border-radius: 0 0 5px 5px;
}

.autosave {
  display: flex;
  align-items: center;
  gap: 4px;
}

.autosave input {
  position: absolute;
  opacity: 0;
}

.toggle {
  display: flex;
  align-items: center;
  gap: 3px;
  width: 28px;
  height: 13px;
  border: 1px solid #777;
  border-radius: 7px;
  padding-left: 1px;
  font-size: 7px;
  background: #fff;
}

.toggle::before {
  content: "";
  width: 9px;
  height: 9px;
  border-radius: 50%;
  background: #5c5c5c;
}

.save {
  margin: 0 4px;
}

.custom {
  margin-left: 7px;
}

.redo, .dim {
  color: #aaa;
}

/* formula bar */
.formula {
  flex: none;
  display: flex;
  align-items: center;
  gap: 5px;
  margin: 5px 5px 4px;
}

.namebox, .fx, .entry {
  display: flex;
  align-items: center;
  height: 16px;
  background: #fff;
  border-radius: 2px;
}

.namebox {
  width: 67px;
  padding: 0 3px 0 4px;
  font-size: 9px;
}

.namebox input, .entry input {
  flex: 1;
}

.dots {
  width: 2px;
  height: 8px;
  margin: 0 1px;
}

.fx {
  width: 48px;
  gap: 7px;
  padding-left: 4px;
}

.fx button {
  font: italic bold 12px/14px "Liberation Serif", serif;
}

.entry {
  flex: 1;
  padding-right: 3px;
}

/* worksheet */
.sheet {
  flex: 1;
  min-height: 0;
  display: flex;
  overflow: hidden;
}

.cells {
  flex: 1;
  min-width: 0;
  overflow: hidden;
  background: #fff;
}

table {
  width: 100%;
  table-layout: fixed;
  border-collapse: separate;
  border-spacing: 0;
}

.c-num { width: 22px; }
.c-a { width: 20px; }
.c-b { width: 48px; }
.c-c { width: 58px; }
.c-d { width: 56px; }
.c-e { width: 110px; }
.c-f { width: 152px; }
.c-g { width: 44px; }
.c-h { width: 15px; }
.c-i { width: 9px; }
.c-j { width: 163px; }
.c-k { width: 55px; }
.c-l { width: 86px; }
.c-m { width: 9px; }
.c-n { width: 53px; }

th, td {
  height: 17px;
  padding: 0;
  border: 0 solid #e1e1e1;
  border-width: 0 1px 1px 0;
  white-space: pre;
  vertical-align: bottom;
}

th {
  background: #f0f0f0;
  color: #444;
  font: 11px/15px "Liberation Sans", Arial, sans-serif;
  text-align: center;
}

thead th {
  height: 14px;
  line-height: 11px;
  border-bottom-color: #aaa;
}

thead .cur {
  background: #e0e0e0;
  color: #107c41;
  border-bottom-color: #107c41;
}

tbody .cur {
  background: #e0e0e0;
  color: #107c41;
  border-right: 2px solid #107c41;
}

.corner {
  background: linear-gradient(135deg, #f0f0f0 65%, #ccc 65%);
}

td {
  font: 14px/14px "Liberation Serif", "Times New Roman", serif;
  color: #000;
  padding-left: 2px;
}

.first td, .first th {
  height: 23px;
}

td.title {
  font: bold 17px/20px "Liberation Sans", Arial, sans-serif;
}

td.value, td.mid, td.arial, td.chart, .money {
  font-family: "Liberation Sans", Arial, sans-serif;
  line-height: 16px;
}

td.value {
  line-height: 18px;
}

td.strong { font-weight: bold; }
td.red { color: #f00; }

td.item {
  text-align: right;
  padding-right: 9px;
  border-right-color: transparent;
}

td.step {
  padding-left: 3px;
}

td.mid {
  text-align: center;
  padding: 0;
}

td.chart {
  font-weight: bold;
  text-align: center;
}

.num {
  text-align: right;
  padding-right: 2px;
}

.g { background: #cfc; border-color: #cfc; }
.lime { background: #0f0; border-color: #0f0; }
.aqua { background: #cff; border-color: #cff; }
.yellow { background: #ff9; }
.gold { background: #fc0; border-color: #fc0; }
.bb { border-bottom-color: #222; }
.br { border-right-color: #222; }
.bg { border-right-color: #888; }
.bbg { border-bottom-color: #888; }

.money {
  display: flex;
  justify-content: space-between;
  padding: 0 7px 0 5px;
}

.selected {
  position: relative;
}

.selected::after {
  content: "";
  position: absolute;
  inset: -1px -1px -2px -1px;
  border: 1px solid #107c41;
}

.vscroll {
  width: 14px;
  display: flex;
  flex-direction: column;
  align-items: center;
  gap: 2px;
  padding: 3px 0;
  background: #f3f3f3;
  border-left: 2px solid #e3e3e3;
  border-right: 2px solid #e3e3e3;
}

.vscroll svg:last-child {
  margin-top: auto;
}

.vscroll .thumb {
  width: 6px;
  height: 12px;
  border-radius: 3px;
  background: #666;
}

/* sheet tabs */
.tabs {
  height: 22px;
  flex: none;
  display: flex;
  align-items: center;
  padding: 0 12px 0 16px;
  background: linear-gradient(90deg, #e0e7df 55%, #e3e3e5 75%);
  font-size: 9px;
}

.arrow {
  display: flex;
  margin-right: 17px;
}

.tab {
  position: relative;
  height: 16px;
  border-radius: 3px;
  padding: 0 5px;
  margin-right: 7px;
  color: #fff;
}

.tab::after {
  content: "";
  position: absolute;
  right: -4px;
  top: 2px;
  width: 1px;
  height: 12px;
  background: #cfd5ce;
}

.tab.plain {
  color: #333;
}

.tab.lead {
  margin-left: 14px;
  padding-right: 7px;
}

.tab.one {
  background: linear-gradient(#fff, #a5dcb9);
  color: #1d5c38;
  font-weight: bold;
  line-height: 12px;
  text-decoration: underline;
  text-underline-offset: 3px;
}

.two { background: #f00; }
.three { background: #305496; }
.tab.four { background: #00b050; color: #222; }
.five { background: #7030a0; }
.tab.six { background: #ff0; color: #222; }
.tab.seven { background: #00b0f0; color: #222; }
.tab.eight { background: #bf8f00; color: #222; }
.nine { background: #375623; }

.tab.prob {
  background: #7030a0;
  padding-right: 0;
  border-radius: 3px 0 0 3px;
}

.prob::after {
  display: none;
}

.more {
  display: flex;
  margin-right: 13px;
}

.tabs .dots {
  margin: 0 10px 0 3px;
}

.hscroll {
  flex: 1;
  height: 11px;
  display: flex;
  align-items: center;
  gap: 4px;
  padding: 0 3px;
  border-radius: 6px;
  background: #f5f5f5;
}

.track {
  flex: 1;
}

.track .thumb {
  width: 65%;
  height: 6px;
  border-radius: 3px;
  background: #6f6f6f;
}

/* status bar */
.status {
  height: 14px;
  flex: none;
  display: flex;
  align-items: center;
  gap: 13px;
  padding: 1px 6px 0 5px;
  background: #f4f4f4;
  font-size: 7px;
}

.status .txt {
  height: 13px;
}

.views {
  display: flex;
  margin-left: auto;
}

.views button {
  width: 27px;
  height: 13px;
  display: flex;
  align-items: center;
  justify-content: center;
}

.views .on {
  background: #dcdcdc;
}

.zoom {
  display: flex;
  align-items: center;
  gap: 4px;
  margin-left: -10px;
}

.zoom button {
  font-size: 9px;
}

.zoom input {
  appearance: none;
  width: 67px;
  height: 8px;
  background: linear-gradient(#888, #888) center / 100% 1px no-repeat;
}

.zoom input::-webkit-slider-thumb {
  appearance: none;
  width: 3px;
  height: 8px;
  background: #555;
}

.pct {
  margin-left: 4px;
}

/* taskbar */
.taskbar {
  height: 32px;
  flex: none;
  display: grid;
  grid-template-columns: 1fr auto 1fr;
  align-items: center;
  background: linear-gradient(90deg, #1a221d, #1c201d 60%, #202020);
  color: #fff;
}

.weather {
  display: flex;
  gap: 4px;
  align-items: center;
  padding-left: 14px;
}

.weather div {
  line-height: 11px;
}

.weather span {
  color: #ccc;
}

.apps {
  display: flex;
  align-items: center;
  gap: 3px;
}

.apps button {
  position: relative;
  width: 26px;
  height: 26px;
  display: flex;
  align-items: center;
  justify-content: center;
  border-radius: 3px;
}

.apps .pill {
  width: 66px;
  height: 22px;
  margin: 0 1px;
  gap: 4px;
  border-radius: 11px;
  background: #2d332f;
}

.apps .open::after {
  content: "";
  position: absolute;
  bottom: 0;
  width: 4px;
  height: 2px;
  border-radius: 1px;
  background: #999;
}

.apps .active {
  background: #2d3331;
}

.apps .active::after {
  width: 11px;
  background: #4cc2ff;
}

.apps .amazon {
  width: 16px;
  height: 16px;
  margin: 0 5px;
  flex-direction: column;
  border-radius: 0;
  background: #fff;
  color: #222;
  font-size: 13px;
  line-height: 10px;
}

.tray {
  display: flex;
  align-items: center;
  justify-content: flex-end;
  gap: 6px;
  padding-right: 9px;
}

.clock {
  margin-left: 8px;
  line-height: 11px;
  text-align: right;
}
```
